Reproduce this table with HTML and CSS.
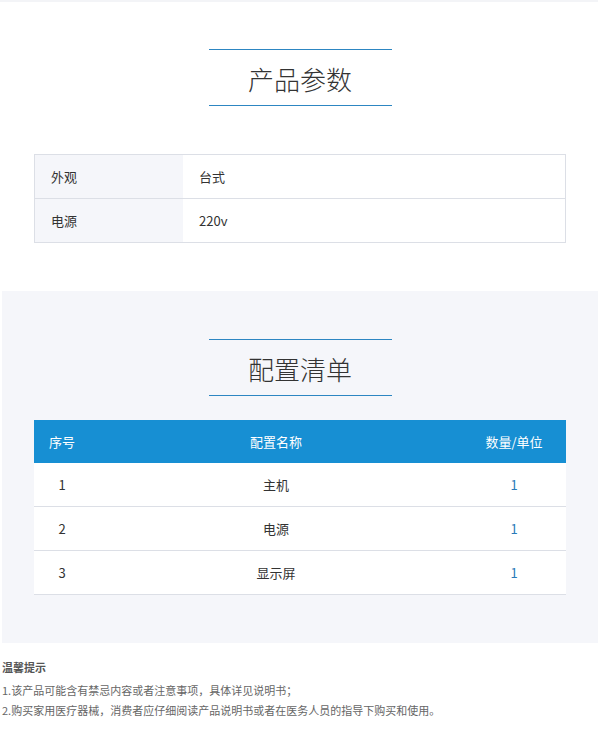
FILE: index.html
```html
<!DOCTYPE html>
<html lang="zh-CN">
<head>
<meta charset="utf-8">
<title>产品参数</title>
<link rel="stylesheet" href="styles.css">
</head>
<body>
<div class="topbar"></div>
<div class="page">
  <section class="params">
    <h2 class="title">产品参数</h2>
    <div class="spec">
      <div class="spec-row">
        <div class="spec-label">外观</div>
        <div class="spec-value">台式</div>
      </div>
      <div class="spec-row">
        <div class="spec-label">电源</div>
        <div class="spec-value">220v</div>
      </div>
    </div>
  </section>
  <section class="config">
    <h2 class="title">配置清单</h2>
    <div class="list">
      <div class="list-row list-head">
        <div>序号</div>
        <div>配置名称</div>
        <div>数量/单位</div>
      </div>
      <div class="list-row">
        <div>1</div>
        <div>主机</div>
        <div class="qty">1</div>
      </div>
      <div class="list-row">
        <div>2</div>
        <div>电源</div>
        <div class="qty">1</div>
      </div>
      <div class="list-row">
        <div>3</div>
        <div>显示屏</div>
        <div class="qty">1</div>
      </div>
    </div>
  </section>
  <div class="notice">
    <div class="notice-title">温馨提示</div>
    <div class="notice-line">1.该产品可能含有禁忌内容或者注意事项，具体详见说明书；</div>
    <div class="notice-line">2.购买家用医疗器械，消费者应仔细阅读产品说明书或者在医务人员的指导下购买和使用。</div>
  </div>
</div>
</body>
</html>
```
FILE: styles.css
```css
* { box-sizing: border-box; }
body {
  margin: 0;
  background: #fff;
  font-family: "Noto Sans CJK SC", "Noto Sans", sans-serif;
  color: #333;
}
.topbar {
  height: 2px;
  background: #f3f4f7;
}
.page {
  padding-left: 2px;
}
.title {
  width: 183px;
  margin: 0 auto;
  height: 57px;
  border-top: 1px solid #2d86c2;
  border-bottom: 1px solid #2d86c2;
  text-align: center;
  font-size: 26px;
  font-weight: 300;
  line-height: 52px;
  padding-top: 3px;
  color: #333;
}
.params {
  padding: 47px 32px 48px;
}
.params .title {
  margin-bottom: 48px;
}
.spec {
  border: 1px solid #dcdfe6;
}
.spec-row {
  display: grid;
  grid-template-columns: 148px 1fr;
  height: 44px;
  border-bottom: 1px solid #dcdfe6;
}
.spec-row:last-child {
  height: 43px;
  border-bottom: none;
}
.spec-label,
.spec-value {
  display: flex;
  align-items: center;
  padding-left: 16px;
  font-size: 13px;
  color: #333;
}
.spec-label {
  background: #f5f6fa;
}
.config {
  background: #f5f6fa;
  padding: 48px 32px 48px;
}
.config .title {
  margin-bottom: 24px;
}
.list {
  background: #fff;
}
.list-row {
  display: grid;
  grid-template-columns: 56px 1fr 104px;
  height: 44px;
  border-bottom: 1px solid #dcdfe6;
  font-size: 13px;
  color: #333;
}
.list-row > div {
  display: flex;
  align-items: center;
  justify-content: center;
}
.list-head {
  height: 43px;
  border-bottom: none;
  background: #178fd3;
  color: #fff;
}
.qty {
  color: #2a7ab8;
}
.notice {
  padding-top: 14px;
  font-size: 11px;
  line-height: 20px;
  color: #666;
}
.notice-title {
  font-weight: 700;
  color: #555;
  margin-bottom: 3px;
}
```
